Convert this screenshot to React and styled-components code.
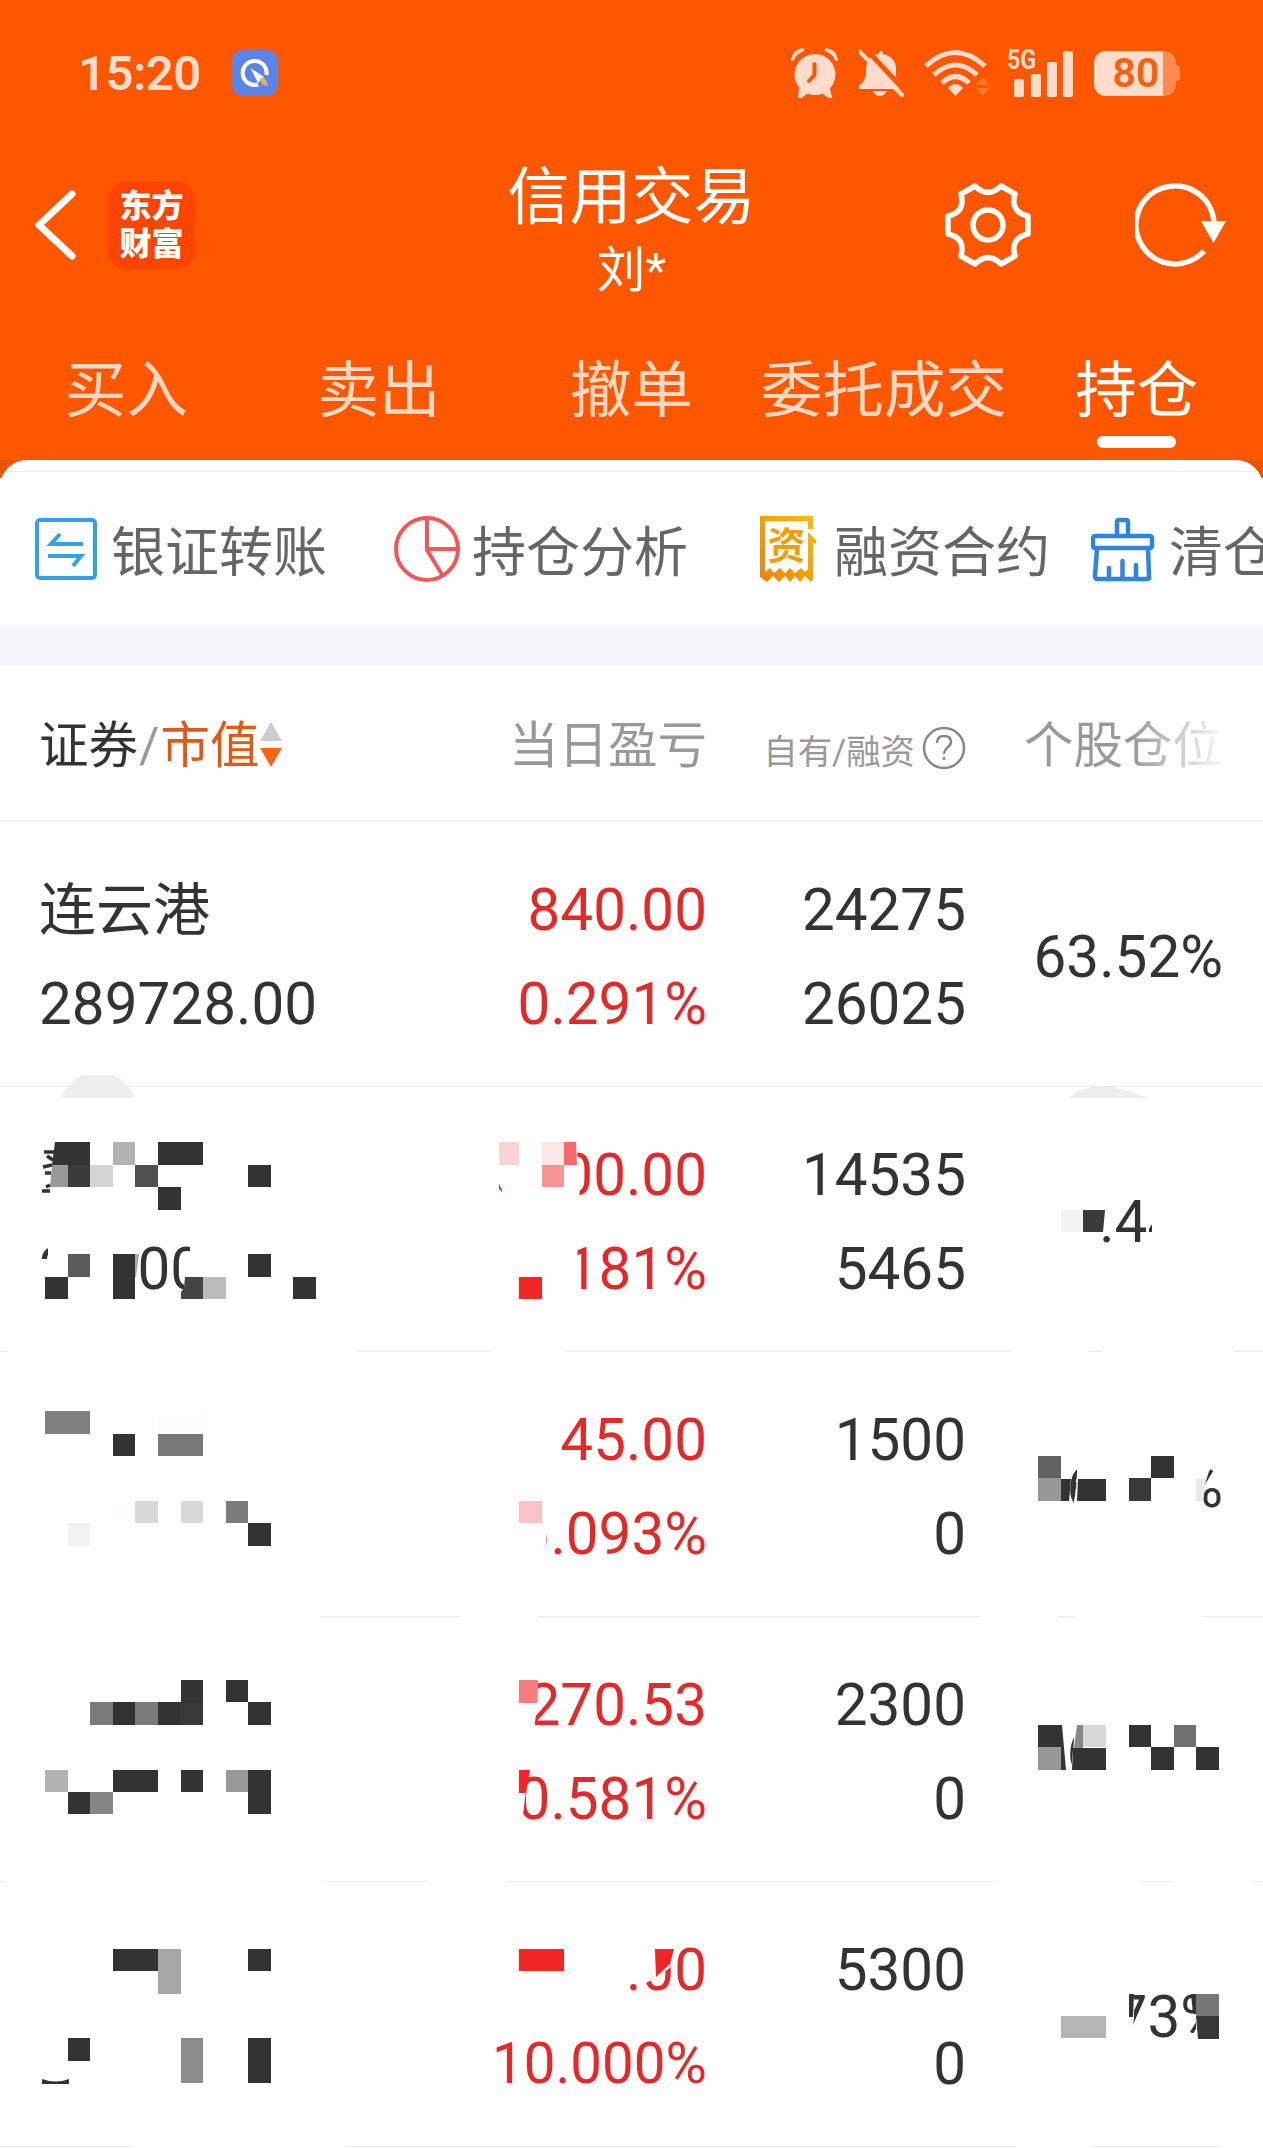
import React from 'react'
import styled, { createGlobalStyle } from 'styled-components'

const GlobalStyle = createGlobalStyle`
  * {
    box-sizing: border-box;
  }
  body {
    margin: 0;
    background: #fefefe;
    font-family: Roboto, 'Noto Sans CJK SC', sans-serif;
    color: #333;
  }
  svg {
    display: block;
    flex-shrink: 0;
  }
`

const Page = styled.div`
  width: 1263px;
  height: 2149px;
  overflow: hidden;
`

const Header = styled.header`
  background: #ff5600;
  height: 460px;
`

const StatusBar = styled.div`
  display: flex;
  align-items: center;
  height: 146px;
  padding: 0 83px 0 78px;
`
const Time = styled.div`
  width: 154px;
  font-size: 49px;
  font-weight: 600;
  letter-spacing: -0.5px;
  color: #ffdccb;
`
const StatusIcons = styled.div`
  display: flex;
  align-items: center;
  margin-left: auto;
`
const Battery = styled.div`
  display: flex;
  align-items: center;
`
const BatteryBody = styled.div`
  display: flex;
  align-items: center;
  justify-content: center;
  width: 82px;
  height: 45px;
  padding-left: 2px;
  border-radius: 12px;
  background: linear-gradient(90deg, #ffdccb 69px, #ff8a4e 69px);
  color: #f5610f;
  font-size: 41px;
  font-weight: 600;
`
const BatteryCap = styled.div`
  width: 4px;
  height: 16px;
  border-radius: 0 4px 4px 0;
  background: #ff8a4e;
`

const NavBar = styled.div`
  display: grid;
  grid-template-columns: 1fr auto 1fr;
  grid-template-rows: 158px;
  height: 158px;
`
const NavLeft = styled.div`
  display: flex;
  align-items: center;
  gap: 32px;
  padding-left: 34px;
`
const NavRight = styled.div`
  display: flex;
  align-items: center;
  justify-content: flex-end;
  gap: 104px;
  padding-right: 36px;
`
const Logo = styled.div`
  width: 87px;
  height: 87px;
  padding-top: 5px;
  border-radius: 18px;
  background: #ff4300;
  color: #fff;
  font-size: 32px;
  font-weight: 900;
  line-height: 38px;
  text-align: center;
`
const TitleBox = styled.div`
  text-align: center;
  color: #fff;
`
const Title = styled.div`
  height: 84px;
  font-size: 62px;
  line-height: 103px;
`
const SubTitle = styled.div`
  font-size: 48.5px;
  line-height: 81px;
`

const Tabs = styled.nav`
  display: flex;
  height: 156px;
`
const Tab = styled.div`
  display: flex;
  flex: 1;
  flex-direction: column;
  align-items: center;
  padding-top: 43px;
  font-size: 61.5px;
  line-height: 89px;
  white-space: nowrap;
  color: ${(props) => (props.$active ? '#fff' : '#ffd9c4')};

  &::after {
    content: '';
    width: 79px;
    height: 12px;
    border-radius: 6px;
    background: ${(props) => (props.$active ? '#fff' : 'transparent')};
  }
`

const SheetBack = styled.div`
  background: linear-gradient(#e85503 18px, #fefefe 18px);
`
const Sheet = styled.main`
  padding-top: 11px;
  border-radius: 27px 27px 0 0;
  background: #fefefe;
  overflow: hidden;
`

const Actions = styled.div`
  display: flex;
  align-items: center;
  height: 156px;
  padding: 0 0 2px 33px;
  border-top: 1px solid #ececec;
  overflow: hidden;
`
const Action = styled.div`
  display: flex;
  align-items: center;
  flex-shrink: 0;
  gap: 12px;
  margin-right: ${(props) => props.$gap}px;
`
const ActionText = styled.span`
  padding-top: 10px;
  font-size: 54px;
  line-height: 80px;
  color: #666;
`
const Divider = styled.div`
  height: 39px;
  background: #f6f7f9;
`

const Columns = styled.div`
  display: grid;
  grid-template-columns: 390px 276px 259px 1fr;
  padding: 0 41px;
  border-bottom: 1px solid #ececec;
`
const ColumnHead = styled(Columns)`
  align-items: center;
  height: 156px;
  padding: 0 41px 5px 39px;
  grid-template-columns: 392px 276px 259px 1fr;
  font-size: 49.5px;
  color: #999;
`
const HeadCell = styled.div`
  display: flex;
  align-items: center;
  justify-content: ${(props) => (props.$left ? 'flex-start' : 'flex-end')};
  gap: ${(props) => props.$gap || 0}px;
  padding-top: ${(props) => props.$down || 0}px;
  white-space: nowrap;
`
const Dark = styled.span`
  margin-right: 1px;
  color: #333;
`
const Sorted = styled.span`
  margin-left: 1px;
  color: #dd5b14;
`
const SmallHead = styled.span`
  padding-top: 1px;
  font-size: 34.4px;
`
const SortSlot = styled.div`
  padding-top: 8px;
`
const Fading = styled.span`
  background: linear-gradient(90deg, #999 55%, #c8c8c8 76%, #f7f7f7 100%);
  background-clip: text;
  color: transparent;
`

const List = styled.div`
  position: relative;
`
const Row = styled(Columns)`
  height: 265px;
  font-size: 58.4px;
  line-height: 94px;
`
const Cell = styled.div`
  padding-top: 41px;
  text-align: ${(props) => (props.$left ? 'left' : 'right')};
  color: ${(props) => (props.$red ? '#e12b2b' : '#333')};
`
const RatioCell = styled(Cell)`
  padding-top: 88px;
  margin-right: -1px;
`
const Line = styled.div`
  height: 94px;
  margin-left: ${(props) => (props.$left ? '-2px' : 0)};
  font-size: ${(props) => (props.$long ? '56.5px' : 'inherit')};
  white-space: nowrap;
`
const Name = styled(Line)`
  margin-left: -2px;
  padding-top: 1px;
  font-size: 57px;
`
const Gap = styled.span`
  display: inline-block;
  width: ${(props) => props.$em}em;
`
const MosaicLayer = styled.svg`
  position: absolute;
  top: 0;
  left: 0;
`

const tabs = ['买入', '卖出', '撤单', '委托成交', '持仓']

// "_" is a hidden digit, "," a hidden point
const holdings = [
  { name: '连云港', value: '289728.00', profit: '840.00', rate: '0.291%', own: '24275', margin: '26025', ratio: '63.52%' },
  { name: '', value: '2__00', profit: '00.00', rate: '181%', own: '14535', margin: '5465', ratio: '.44%' },
  { name: '', value: '', profit: '45.00', rate: '0.093%', own: '1500', margin: '0', ratio: '6,__%' },
  { name: '', value: '', profit: '270.53', rate: '0.581%', own: '2300', margin: '0', ratio: '6,__%' },
  { name: '', value: '', profit: '.00', rate: '10.000%', own: '5300', margin: '0', ratio: '73%' },
]

// white areas: polygons that hide parts of the numbers and of the row lines
const covers = [
  '48,1240 139,1240 139,1310 48,1310',
  '38,1259 60,1259 60,1310 38,1310',
  '190,1238 215,1238 215,1310 184,1310 184,1276 190,1256',
  '530,1130 576,1130 578,1165 580,1188 579,1200 530,1200',
  '560,1240 577.5,1240 577.5,1300 560,1300',
  '1152,1190 1230,1190 1230,1260 1152,1260',
  '510,1490 543,1490 547.5,1515 547.5,1528 545,1552 545,1560 510,1560',
  '1078,1455 1207,1455 1210,1468 1205,1484 1203,1498 1203,1512 1072,1512 1076,1490',
  '510,1675 538,1675 538,1700 535,1722 535,1735 510,1735',
  '510,1765 530,1765 526,1790 523,1815 510,1815',
  '1076,1720 1230,1720 1230,1785 1072,1785 1072,1760',
  '1066,1770 1080,1770 1080,1785 1066,1785',
  '620,1940 668,1940 674,1949 670,1968 655,1978 646,1983 620,1983',
  '1110,1985 1134,1985 1134,2018 1132,2034 1132,2050 1110,2050',
  '1196,1985 1240,1985 1240,2050 1182,2050 1184,2033 1196,2033',
  '7,1349 358,1349 358,1354 7,1354',
  '489,1349 567,1349 567,1354 489,1354',
  '1010,1349 1089,1349 1089,1354 1010,1354',
  '1102,1349 1234,1349 1234,1354 1102,1354',
  '0,1614 320,1614 320,1619 0,1619',
  '460,1614 538,1614 538,1619 460,1619',
  '980,1614 1058,1614 1058,1619 980,1619',
  '1075,1614 1203,1614 1203,1619 1075,1619',
  '6,1879 326,1879 326,1884 6,1884',
  '427,1879 506,1879 506,1884 427,1884',
  '994,1879 1140,1879 1140,1884 994,1884',
  '1173,1879 1252,1879 1252,1884 1173,1884',
  '131,2144 347,2144 347,2149 131,2149',
  '1015,2144 1093,2144 1093,2149 1015,2149',
  '1220,2144 1263,2144 1263,2149 1220,2149',
]

// x, y, columns, rows, colour; on a grid of about 22.5px
const blocks = [
  [5, 51, 1, 1, '#b3b3b3'], [7, 51, 2, 1, '#333'], [3, 52, 1, 1, '#3b3b3b'], [4, 52, 1, 1, '#d4d4d4'],
  [6, 52, 1, 1, '#505050'], [7, 53, 1, 1, '#333'], [11, 52, 1, 1, '#333'],
  [3, 56, 1, 1, '#5a5a5a'], [2, 57, 1, 1, '#333'], [5, 56, 1, 2, '#333'],
  [9, 57, 1, 1, '#bcbcbc'], [11, 56, 1, 1, '#333'], [13, 57, 1, 1, '#333'],
  [24, 51, 1, 1, '#fde7e7'], [24, 52, 1, 1, '#f79496'], [23, 57, 1, 1, '#f42525'],
  [47, 54, 1, 1, '#f4f4f4'],

  [2, 63, 2, 1, '#808080'], [7, 63, 2, 1, '#fdfdfd'], [5, 64, 1, 1, '#333'], [7, 64, 2, 1, '#787878'],
  [5, 67, 1, 1, '#fdfdfd'], [6, 67, 1, 1, '#d8d8d8'], [8, 67, 1, 1, '#d8d8d8'], [10, 67, 1, 1, '#7c7c7c'],
  [3, 68, 1, 1, '#f2f2f2'], [11, 68, 1, 1, '#333'], [23, 67, 1, 1, '#fbc3c4'],
  [46, 65, 1, 1, '#636363'], [46, 66, 1, 1, '#979797'], [50, 66, 1, 1, '#383838'], [51, 65, 1, 1, '#333'],

  [8, 75, 1, 1, '#333'], [10, 75, 1, 1, '#333'], [4, 76, 1, 1, '#7a7a7a'], [5, 76, 1, 1, '#333'],
  [6, 76, 1, 1, '#7a7a7a'], [7, 76, 1, 1, '#333'], [8, 76, 1, 1, '#383838'], [11, 76, 1, 1, '#333'],
  [2, 79, 1, 1, '#b3b3b3'], [5, 79, 2, 1, '#333'], [8, 79, 1, 1, '#333'], [10, 79, 1, 1, '#999'],
  [11, 79, 1, 2, '#333'], [3, 80, 1, 1, '#333'], [4, 80, 1, 1, '#858585'],
  [46, 77, 1, 1, '#333'], [46, 78, 1, 1, '#979797'], [48, 77, 1, 1, '#d8d8d8'],
  [50, 77, 1, 1, '#333'], [52, 77, 1, 1, '#707070'], [51, 78, 1, 1, '#333'], [53, 78, 1, 1, '#333'],

  [5, 87, 2, 1, '#333'], [7, 87, 1, 2, '#a6a6a6'], [11, 87, 1, 1, '#333'], [3, 91, 1, 1, '#333'],
  [8, 91, 1, 2, '#8c8c8c'], [11, 91, 1, 2, '#333'], [23, 87, 2, 1, '#f42525'],
  [47, 90, 2, 1, '#b5b5b5'], [53, 89, 1, 1, '#777'],
]

// blocks cut by the edge of a glyph
const chips = [
  ['M55 1142H90V1165H52Z', '#333'],
  ['M52 1165H68V1187H50Z', '#999'],
  ['M135 1254H139L136 1277H135Z', '#aaa'],
  ['M185 1277H203V1299H181V1292L184 1288Z', '#444'],
  ['M499 1142H519V1165H499.500Z', '#f9d3d4'],
  ['M564 1142H576L577 1165H564Z', '#f46a6c'],
  ['M499 1184L502 1190V1192L499 1189Z', '#e12b2b'],
  ['M1083 1210H1105L1103 1232H1083Z', '#3a3a3a'],
  ['M1061 1479H1071L1069 1501H1061Z', '#333'],
  ['M1078 1479H1106V1501H1077Z', '#333'],
  ['M1196 1479H1206L1203 1501H1196Z', '#e9e9e9'],
  ['M519 1680H538L537.500 1703H519Z', '#f77c7e'],
  ['M519 1770H530L526 1793H519Z', '#f42525'],
  ['M1061 1725H1062L1066 1770H1061Z', '#333'],
  ['M1077 1725H1083V1748H1074Z', '#888'],
  ['M1073 1748H1106V1770H1072Z', '#333'],
  ['M655 1949H674L670 1964L656 1977Z', '#f42525'],
  ['M1129 1994H1134L1133 2017H1129Z', '#333'],
  ['M1191 1994H1196V2014H1193Z', '#333'],
  ['M1196 2016H1219V2039H1198Z', '#373737'],
  ['M42 2079Q56 2084 69 2079V2084H42Z', '#333'],
]

const Mosaic = () => (
  <MosaicLayer width="1263" height="1327" viewBox="0 822 1263 1327">
    <path d="M61 1098Q67 1082 83 1075H113Q129 1082 135 1098Z" fill="#eee" />
    <path d="M1068 1098Q1082 1086 1103 1086Q1118 1086 1147 1098Z" fill="#eee" />
    {covers.map((points) => <polygon key={points} points={points} fill="#fefefe" />)}
    {blocks.map(([x, y, w, h, color]) => {
      const left = Math.round(x * 22.57)
      const top = Math.round(y * 22.4)
      return (
        <rect
          key={`${x}-${y}`}
          x={left}
          y={top}
          width={Math.round((x + w) * 22.57) - left}
          height={Math.round((y + h) * 22.4) - top}
          fill={color}
        />
      )
    })}
    {chips.map(([d, color]) => <path key={d} d={d} fill={color} />)}
    <path d="M44 1152H54M47 1156L53 1160M43 1167L52 1165M45 1173H51M46 1187L50 1185M42 1191H50" stroke="#333" strokeWidth="3.500" />
  </MosaicLayer>
)

const Digits = ({ text }) => text.split('').map((char, i) => {
  if (char === '_') return <Gap key={i} $em={0.5615} />
  if (char === ',') return <Gap key={i} $em={0.263} />
  return char
})

const AppIcon = () => (
  <svg width="46" height="46" viewBox="0 0 46 46">
    <rect width="46" height="46" rx="11" fill="#5b84e6" />
    <path d="M26 34.500A12 12 0 1 1 34.500 25" fill="none" stroke="#fff" strokeWidth="4" />
    <path d="M18.500 18L32 27L26 33Z" fill="#fff" />
    <path d="M28 28Q34 26 36 36Q28 35 28 28Z" fill="#e5b25c" />
  </svg>
)

const AlarmIcon = () => (
  <svg width="68" height="50" viewBox="0 0 68 50" fill="#ffdccb">
    <circle cx="24" cy="26.500" r="20.500" />
    <path d="M0 12Q2 1 12 0Q14 1 13 3Q5 6 3 12Q1 14 0 12ZM47 12Q45 1 35 0Q33 1 34 3Q42 6 44 12Q46 14 47 12Z" />
    <path d="M9 41L8 49H10L17 44ZM38 41L40 49H38L31 44Z" stroke="#ffdccb" strokeWidth="2" />
    <path d="M23.500 16V27L18 33" fill="none" stroke="#ff5600" strokeWidth="4" strokeLinecap="round" />
  </svg>
)

const BellOffIcon = () => (
  <svg width="65" height="48" viewBox="0 0 65 48" fill="#ffdccb">
    <path d="M22 2Q24 2 24 5Q37 8 37 20V27Q38 33 43 38V40H0V37Q7 31 7 25V19Q9 6 20 5Q20 2 22 2Z" />
    <path d="M14 42H28Q25 47 21 47Q16 47 14 42Z" />
    <path d="M4 -3L48 44" stroke="#ff5600" strokeWidth="5" />
    <path d="M0 2L43 46" stroke="#ffdccb" strokeWidth="4" strokeLinecap="round" />
  </svg>
)

const WifiIcon = () => (
  <svg width="83" height="48" viewBox="0 0 83 48">
    <g fill="none" stroke="#ffdccb" strokeWidth="5">
      <path d="M2 17Q31 -10 61 17" />
      <path d="M10 26Q31.500 6 53 26" />
      <path d="M18 34Q31.500 21 45 34" />
    </g>
    <path d="M24 39Q31.500 31 39 39L31.500 47Z" fill="#ffdccb" />
    <path d="M52 36L58.500 28L65 36ZM52 39L58.500 47L65 39Z" fill="#ff7630" />
  </svg>
)

const SignalBox = styled.div`
  display: flex;
  align-items: flex-start;
  width: 87px;
  height: 48px;
`
const NetType = styled.span`
  width: 0;
  font-size: 28px;
  font-weight: 700;
  line-height: 21px;
  color: #ffdccb;
`
const Narrow = styled.span`
  display: inline-block;
  transform: scaleX(0.83);
  transform-origin: left;
`

const Signal = () => (
  <SignalBox>
    <NetType><Narrow>5G</Narrow></NetType>
    <svg width="67" height="48" viewBox="0 0 67 48" fill="#ffdccb">
      <rect x="7" y="30" width="10" height="18" rx="2" />
      <rect x="24" y="25" width="10" height="23" rx="2" />
      <rect x="40" y="13" width="10" height="35" rx="2" />
      <rect x="56" y="2" width="10" height="46" rx="2" />
    </svg>
  </SignalBox>
)

const BackIcon = () => (
  <svg width="42" height="70" viewBox="0 0 42 70">
    <path d="M38 4L5 35L38 66" fill="none" stroke="#fff" strokeWidth="7" strokeLinecap="round" strokeLinejoin="round" />
  </svg>
)

const GearIcon = () => (
  <svg width="86" height="86" viewBox="-43 -43 86 86" fill="none" stroke="#fff" strokeWidth="5.500" strokeLinejoin="round">
    <path d="M-13 -39Q0 -26 13 -39L27 -31Q22 -13 40 -9V9Q22 13 27 31L13 39Q0 26 -13 39L-27 31Q-22 13 -40 9V-9Q-22 -13 -27 -31Z" />
    <circle r="15" />
  </svg>
)

const RefreshIcon = () => (
  <svg width="92" height="86" viewBox="0 0 92 86">
    <path d="M69 69A39 39 0 1 1 79 42" fill="none" stroke="#fff" strokeWidth="5.500" />
    <path d="M66 39H91L78.500 61Z" fill="#fff" />
  </svg>
)

const TransferIcon = () => (
  <svg width="66" height="66" viewBox="0 0 66 66" fill="none" stroke="#33a0ea" strokeWidth="4">
    <rect x="4" y="4" width="58" height="58" rx="3" />
    <path d="M50 28H18L27 18M15 40H48L40 50" />
  </svg>
)

const PieIcon = () => (
  <svg width="66" height="66" viewBox="0 0 66 66" fill="none" stroke="#ef5858" strokeWidth="4">
    <circle cx="33" cy="33" r="31" />
    <path d="M33 2V34L49 60M33 33H63" />
  </svg>
)

const ContractIcon = () => (
  <svg width="66" height="66" viewBox="0 0 66 66">
    <defs>
      <linearGradient id="contract" x1="1" y1="0" x2="0" y2="1">
        <stop offset="0" stopColor="#fbbf0c" />
        <stop offset="1" stopColor="#e8830c" />
      </linearGradient>
    </defs>
    <path
      d="M4 0H57V13H52V5H9V56L14 52L18 57L24 52L29 57L34 52L39 57L45 52L49 56L52 53V16L60 24V28L57 27V63L55 66L49 60L44 66L39 60L34 66L29 60L23 66L17 60L11 66L4 61Z"
      fill="url(#contract)"
    />
    <text x="30.500" y="43" textAnchor="middle" fontFamily="Noto Sans CJK SC" fontSize="38" fontWeight="700" fill="#eda00e">资</text>
  </svg>
)

const BroomIcon = () => (
  <svg width="66" height="66" viewBox="0 0 66 66" fill="none" stroke="#2d86e0" strokeWidth="4.500" strokeLinejoin="round" strokeLinecap="round">
    <path d="M26 19V6Q26 4 28 4H35Q37 4 37 6V19" />
    <rect x="2" y="20" width="59" height="12" rx="2" />
    <path d="M6 33L4 60Q4 63 7 63H56Q59 63 58 60L57 33M18 62V52M31.500 62V45M45 62V49" />
  </svg>
)

const SortIcon = () => (
  <svg width="22" height="46" viewBox="0 0 22 46">
    <path d="M11 0L22 19H0Z" fill="#ccc" />
    <path d="M0 26H22L11 45Z" fill="#f76516" />
  </svg>
)

const HelpIcon = () => (
  <svg width="44" height="44" viewBox="0 0 44 44" fill="none" stroke="#888" strokeWidth="2.500">
    <circle cx="22" cy="22" r="20" />
    <path d="M15 17Q15 10 22 10Q29 10 29 16Q29 19 25 22Q22 25 22 28" />
    <path d="M22 31V34" />
  </svg>
)

const actions = [
  { text: '银证转账', icon: <TransferIcon />, gap: 67 },
  { text: '持仓分析', icon: <PieIcon />, gap: 68 },
  { text: '融资合约', icon: <ContractIcon />, gap: 41 },
  { text: '清仓', icon: <BroomIcon />, gap: 0 },
]

function App() {
  return (
    <Page>
      <GlobalStyle />
      <Header>
        <StatusBar>
          <Time>15:20</Time>
          <AppIcon />
          <StatusIcons>
            <AlarmIcon />
            <BellOffIcon />
            <WifiIcon />
            <Signal />
            <Battery>
              <BatteryBody>80</BatteryBody>
              <BatteryCap />
            </Battery>
          </StatusIcons>
        </StatusBar>
        <NavBar>
          <NavLeft>
            <BackIcon />
            <Logo>东方<br />财富</Logo>
          </NavLeft>
          <TitleBox>
            <Title>信用交易</Title>
            <SubTitle>刘*</SubTitle>
          </TitleBox>
          <NavRight>
            <GearIcon />
            <RefreshIcon />
          </NavRight>
        </NavBar>
        <Tabs>
          {tabs.map((tab) => <Tab key={tab} $active={tab === '持仓'}>{tab}</Tab>)}
        </Tabs>
      </Header>
      <SheetBack>
        <Sheet>
          <Actions>
            {actions.map(({ text, icon, gap }) => (
              <Action key={text} $gap={gap}>
                {icon}
                <ActionText>{text}</ActionText>
              </Action>
            ))}
          </Actions>
          <Divider />
          <ColumnHead>
            <HeadCell $left $gap={1}>
              <span><Dark>证券</Dark>/<Sorted>市值</Sorted></span>
              <SortSlot><SortIcon /></SortSlot>
            </HeadCell>
            <HeadCell>当日盈亏</HeadCell>
            <HeadCell $gap={7} $down={14}>
              <SmallHead>自有/融资</SmallHead>
              <HelpIcon />
            </HeadCell>
            <HeadCell><Fading>个股仓位</Fading></HeadCell>
          </ColumnHead>
          <List>
            {holdings.map((item) => (
              <Row key={item.own}>
                <Cell $left>
                  <Name>{item.name}</Name>
                  <Line $left><Digits text={item.value} /></Line>
                </Cell>
                <Cell $red>
                  <Line>{item.profit}</Line>
                  <Line $long={item.rate.length > 6}>{item.rate}</Line>
                </Cell>
                <Cell>
                  <Line>{item.own}</Line>
                  <Line>{item.margin}</Line>
                </Cell>
                <RatioCell>
                  <Line><Digits text={item.ratio} /></Line>
                </RatioCell>
              </Row>
            ))}
            <Mosaic />
          </List>
        </Sheet>
      </SheetBack>
    </Page>
  )
}

export default App
